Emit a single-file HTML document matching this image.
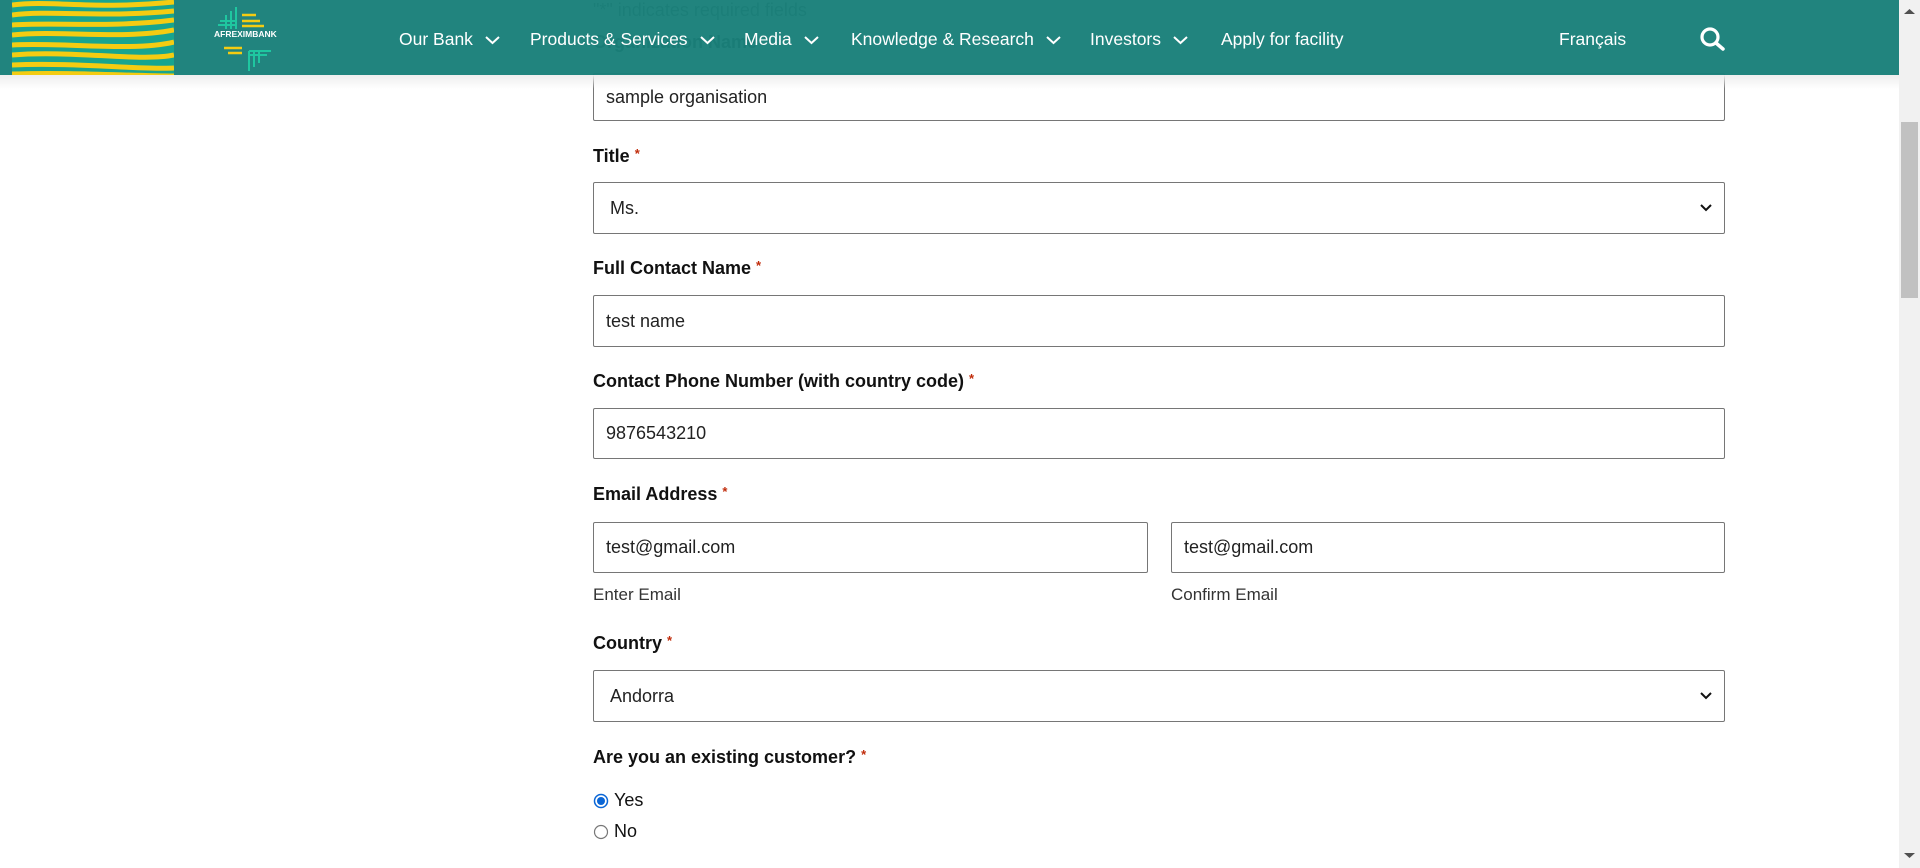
<!DOCTYPE html>
<html><head><meta charset="utf-8"><style>
*{box-sizing:border-box;margin:0;padding:0}
body{width:1920px;height:868px;overflow:hidden;background:#fff;font-family:"Liberation Sans",sans-serif;color:#111;position:relative}
.a{position:absolute;white-space:nowrap}
.lbl{font-weight:bold;font-size:18px;color:#111}
.lbl span{color:#c02b0a;font-size:13px;margin-left:0px;vertical-align:top}
.in{position:absolute;border:1px solid #767676;border-radius:2px;background:#fff;font-size:18px;color:#222;padding-left:12px;display:flex;align-items:center}
.sel{padding-left:16px}
.chev{position:absolute;right:12px;top:50%;margin-top:-5px}
.hdr{position:absolute;left:0;top:0;width:1899px;height:75px;background:rgba(26,128,122,0.97)}
.nav{position:absolute;top:29px;color:#fff;font-size:17.5px;display:flex;align-items:center}
.nav svg{margin-left:12px}
.sub{font-size:17px;color:#333}
</style></head><body>
<div class="a" style="left:593px;top:0px;font-size:18px;color:#555">"*" indicates required fields</div>
<div class="a lbl" style="left:593px;top:32px">Organization Name <span>*</span></div>
<div class="in" style="left:593px;top:73px;width:1132px;height:48px">sample organisation</div>

<div class="a lbl" style="left:593px;top:146px">Title <span>*</span></div>
<div class="in sel" style="left:593px;top:182px;width:1132px;height:52px">Ms.<svg class="chev" width="12" height="9" viewBox="0 0 12 9"><path d="M1 2l5 5 5-5" stroke="#111" stroke-width="2" fill="none"/></svg></div>

<div class="a lbl" style="left:593px;top:258px">Full Contact Name <span>*</span></div>
<div class="in" style="left:593px;top:295px;width:1132px;height:52px">test name</div>

<div class="a lbl" style="left:593px;top:371px">Contact Phone Number (with country code) <span>*</span></div>
<div class="in" style="left:593px;top:408px;width:1132px;height:51px">9876543210</div>

<div class="a lbl" style="left:593px;top:484px">Email Address <span>*</span></div>
<div class="in" style="left:593px;top:522px;width:555px;height:51px">test@gmail.com</div>
<div class="in" style="left:1171px;top:522px;width:554px;height:51px">test@gmail.com</div>
<div class="a sub" style="left:593px;top:585px">Enter Email</div>
<div class="a sub" style="left:1171px;top:585px">Confirm Email</div>

<div class="a lbl" style="left:593px;top:633px">Country <span>*</span></div>
<div class="in sel" style="left:593px;top:670px;width:1132px;height:52px">Andorra<svg class="chev" width="12" height="9" viewBox="0 0 12 9"><path d="M1 2l5 5 5-5" stroke="#111" stroke-width="2" fill="none"/></svg></div>

<div class="a lbl" style="left:593px;top:747px">Are you an existing customer? <span>*</span></div>
<svg class="a" style="left:593px;top:793px" width="16" height="16"><circle cx="8" cy="8" r="6.5" fill="#fff" stroke="#0a66d6" stroke-width="1.5"/><circle cx="8" cy="8" r="4" fill="#0a66d6"/></svg>
<div class="a" style="left:614px;top:790px;font-size:18px">Yes</div>
<svg class="a" style="left:593px;top:824px" width="16" height="16"><circle cx="8" cy="8" r="6.5" fill="#fff" stroke="#777" stroke-width="1.2"/></svg>
<div class="a" style="left:614px;top:821px;font-size:18px">No</div>

<div class="hdr">
<svg class="a" style="left:12px;top:0" width="162" height="75" viewBox="0 0 162 75">
<rect width="162" height="75" fill="#17a58f"/>
<g stroke="#f4cc12" stroke-width="5" fill="none">
<path d="M0 5 C40 0 80 10 162 2"/><path d="M0 15 C40 10 90 18 162 11"/><path d="M0 25 C40 22 100 28 162 20"/><path d="M0 35 C50 30 110 40 162 30"/><path d="M0 45 C50 42 120 52 162 42"/><path d="M0 55 C60 50 130 62 162 55"/><path d="M0 65 C60 62 130 70 162 68"/><path d="M0 74 C60 72 120 76 162 76"/>
</g></svg>
<svg class="a" style="left:212px;top:5px" width="66" height="68" viewBox="0 0 66 68">
<g stroke="#1fc7a0" stroke-width="2" fill="none"><path d="M14 10v14M19 6v18M24 2v22M6 20h18M8 16h16"/><path d="M37 46v20M42 46v16M47 46v12M37 46h22M37 50h18"/></g>
<g stroke="#f4cc12" stroke-width="2.5"><path d="M30 10h14M30 16h18M30 21h22M12 43h18M16 48h14"/></g>
<text x="2" y="32" font-family="Liberation Sans" font-weight="bold" font-size="8.5" fill="#fff">AFREXIMBANK</text></svg>
<div class="nav" style="left:399px">Our Bank<svg width="15" height="10"><path d="M1 2l6.5 6 6.5-6" stroke="#fff" stroke-width="2" fill="none"/></svg></div>
<div class="nav" style="left:530px">Products &amp; Services<svg width="15" height="10"><path d="M1 2l6.5 6 6.5-6" stroke="#fff" stroke-width="2" fill="none"/></svg></div>
<div class="nav" style="left:744px">Media<svg width="15" height="10"><path d="M1 2l6.5 6 6.5-6" stroke="#fff" stroke-width="2" fill="none"/></svg></div>
<div class="nav" style="left:851px">Knowledge &amp; Research<svg width="15" height="10"><path d="M1 2l6.5 6 6.5-6" stroke="#fff" stroke-width="2" fill="none"/></svg></div>
<div class="nav" style="left:1090px">Investors<svg width="15" height="10"><path d="M1 2l6.5 6 6.5-6" stroke="#fff" stroke-width="2" fill="none"/></svg></div>
<div class="nav" style="left:1221px">Apply for facility</div>
<div class="nav" style="left:1559px">Français</div>
<svg class="a" style="left:1700px;top:27px" width="26" height="24" viewBox="0 0 26 24"><circle cx="10" cy="10" r="8" stroke="#fff" stroke-width="3.2" fill="none"/><path d="M16 16l7 6" stroke="#fff" stroke-width="3.5" stroke-linecap="round"/></svg>
</div>
<div class="a" style="left:0;top:75px;width:1899px;height:14px;background:linear-gradient(#eee,rgba(255,255,255,0))"></div>
<div class="a" style="left:1899px;top:0;width:21px;height:868px;background:#f1f1f1"></div>
<div class="a" style="left:1901px;top:122px;width:17px;height:176px;background:#c1c1c1"></div>
<svg class="a" style="left:1904px;top:8px" width="11" height="7"><path d="M0 6l5.5-5 5.5 5z" fill="#505050"/></svg>
<svg class="a" style="left:1904px;top:852px" width="11" height="7"><path d="M0 1l5.5 5 5.5-5z" fill="#505050"/></svg>
</body></html>
